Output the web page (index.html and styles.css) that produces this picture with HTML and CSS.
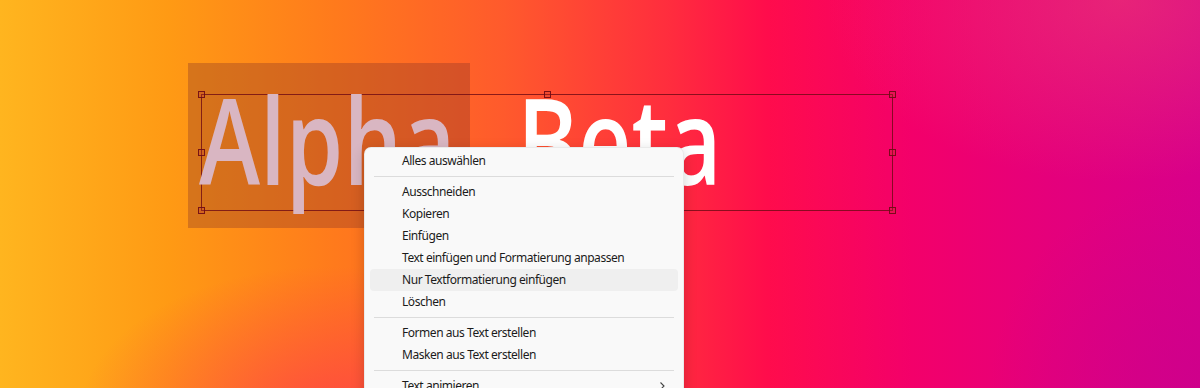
FILE: index.html
```html
<!DOCTYPE html>
<html lang="de">
<head>
<meta charset="utf-8">
<title>Alpha Beta</title>
<link rel="stylesheet" href="styles.css">
</head>
<body>
<div class="canvas">
  <div class="sel-highlight"></div>
  <div class="textbox">
    <div class="words"><span class="alpha">Alpha</span><span class="beta">Beta</span></div>
    <span class="h h-tl"></span><span class="h h-tm"></span><span class="h h-tr"></span>
    <span class="h h-ml"></span><span class="h h-mr"></span>
    <span class="h h-bl"></span><span class="h h-bm"></span><span class="h h-br"></span>
  </div>
  <div class="menu">
    <div class="item">Alles auswählen</div>
    <div class="sep"></div>
    <div class="item">Ausschneiden</div>
    <div class="item">Kopieren</div>
    <div class="item">Einfügen</div>
    <div class="item">Text einfügen und Formatierung anpassen</div>
    <div class="item hover">Nur Textformatierung einfügen</div>
    <div class="item">Löschen</div>
    <div class="sep"></div>
    <div class="item">Formen aus Text erstellen</div>
    <div class="item">Masken aus Text erstellen</div>
    <div class="sep"></div>
    <div class="item sub">Text animieren<svg class="chev" width="8" height="10" viewBox="0 0 8 10"><path d="M2.5 1.5 L6 5 L2.5 8.5" fill="none" stroke="#444" stroke-width="1.1"/></svg></div>
  </div>
</div>
</body>
</html>
```

FILE: styles.css
```css
html, body {
  margin: 0;
  padding: 0;
  width: 1200px;
  height: 388px;
  overflow: hidden;
}
.canvas {
  position: relative;
  width: 1200px;
  height: 388px;
  overflow: hidden;
  background:
    radial-gradient(ellipse 420px 260px at 1120px 0px, rgba(240,70,110,0.5), rgba(240,70,110,0) 70%),
    radial-gradient(ellipse 360px 220px at 330px 420px, rgba(255,40,90,0.6), rgba(255,40,90,0) 70%),
    radial-gradient(ellipse 300px 300px at 1200px 388px, rgba(200,0,140,0.6), rgba(200,0,140,0) 70%),
    linear-gradient(90deg, #ffb51f 0%, #ff9a14 14%, #ff7a1c 28%, #ff5a2c 42%, #ff2c3e 56%, #ff0c4c 64%, #f3006a 76%, #e4007c 88%, #d8008a 100%);
  font-family: "Noto Sans", "Open Sans", sans-serif;
}
.sel-highlight {
  position: absolute;
  left: 188px;
  top: 63px;
  width: 282px;
  height: 165px;
  background: rgba(130, 50, 40, 0.33);
}
.textbox {
  position: absolute;
  left: 201px;
  top: 94px;
  width: 692px;
  height: 117px;
  border: 1px solid rgba(110, 10, 20, 0.8);
  box-sizing: border-box;
}
.words {
  position: absolute;
  left: -3px;
  top: -36px;
  font-family: "Open Sans", "Noto Sans", sans-serif;
  font-size: 120px;
  font-weight: 600;
  line-height: 160px;
  white-space: nowrap;
  transform: scaleX(0.77);
  transform-origin: 0 0;
  display: flex;
  gap: 80px;
}
.alpha { color: #d9b6c2; }
.beta { color: #ffffff; }
.h {
  position: absolute;
  width: 5px;
  height: 5px;
  border: 1px solid rgba(110, 10, 20, 0.9);
  background: rgba(200, 60, 40, 0.25);
}
.h-tl { left: -4px; top: -4px; }
.h-tm { left: 342px; top: -4px; }
.h-tr { right: -4px; top: -4px; }
.h-ml { left: -4px; top: 54px; }
.h-mr { right: -4px; top: 54px; }
.h-bl { left: -4px; bottom: -4px; }
.h-bm { left: 342px; bottom: -4px; }
.h-br { right: -4px; bottom: -4px; }
.menu {
  position: absolute;
  left: 364px;
  top: 147px;
  width: 320px;
  box-sizing: border-box;
  background: #f9f9f9;
  border: 1px solid rgba(0,0,0,0.06);
  border-radius: 7px;
  padding: 2px 5px 8px 5px;
  box-shadow: 0 4px 14px rgba(0,0,0,0.18);
}
.item {
  height: 22px;
  line-height: 22px;
  padding-left: 32px;
  font-size: 12px;
  letter-spacing: -0.45px;
  color: #1b1b1b;
  border-radius: 4px;
  position: relative;
  white-space: nowrap;
}
.item.hover {
  background: #efefef;
}
.sep {
  height: 1px;
  background: #dcdcdc;
  margin: 4px 4px;
}
.chev {
  position: absolute;
  right: 12px;
  top: 6px;
}
```
